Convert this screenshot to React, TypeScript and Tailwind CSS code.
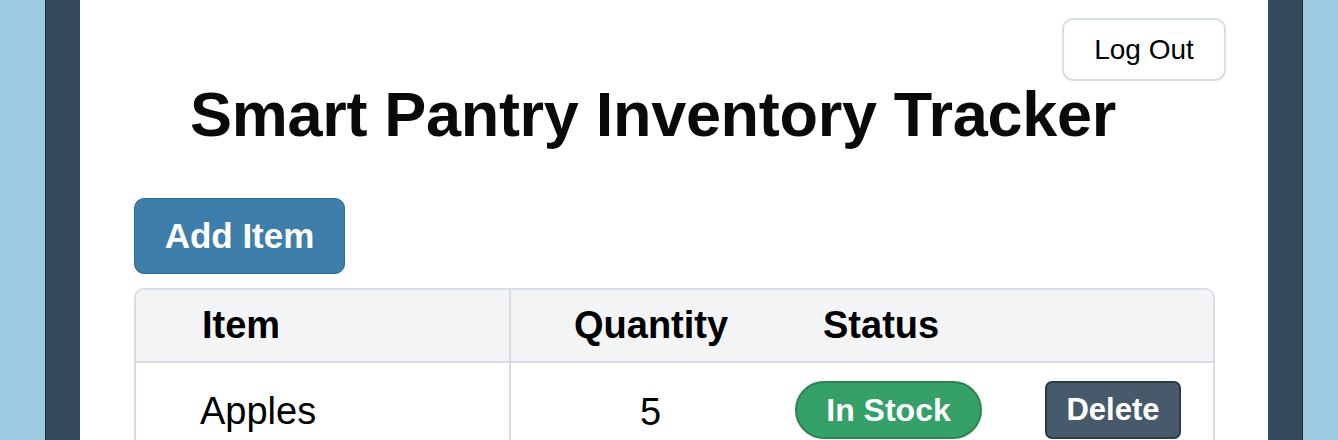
export default function App() {
  return (
    <div
      className="flex h-[440px] w-[1338px] overflow-hidden bg-[#9dcae0]"
      style={{ fontFamily: '"Liberation Sans", Arial, sans-serif' }}
    >
      <div className="ml-[45px] flex h-full w-[1258px] border-x border-[#1f2d38] bg-[#34495a] px-[34px]">
        <div className="flex h-full w-full flex-col bg-white">
          <div className="flex justify-end pr-[42px] pt-[18px]">
            <button className="h-[63px] w-[164px] rounded-[11px] border-2 border-[#d6e0e7] bg-white text-[28px] text-black">
              Log Out
            </button>
          </div>
          <h1 className="-mt-[3px] ml-[110px] text-[63px] font-bold leading-[72px] tracking-[-0.3px] text-[#0a0a0a]">
            Smart Pantry Inventory Tracker
          </h1>
          <div className="mt-[48px] pl-[54px]">
            <button className="h-[76px] w-[211px] rounded-[10px] border border-[#2d6a96] bg-[#3d7eaa] text-[35px] font-bold text-white">
              Add Item
            </button>
          </div>
          <div className="ml-[54px] mt-[14px] w-[1081px] rounded-t-[10px] border-2 border-b-0 border-[#d5dee6]">
            <div className="flex h-[73px] items-center rounded-t-[9px] border-b-2 border-[#d5dee6] bg-[#f2f4f6] text-[38px] font-bold text-black">
              <div className="flex h-full w-[375px] items-center border-r-2 border-[#d5dee6] pl-[66px]">Item</div>
              <div className="w-[312px] pl-[63px]">Quantity</div>
              <div>Status</div>
            </div>
            <div className="flex h-[80px] items-start pt-[18px] text-[38px] text-black">
              <div className="-mt-[18px] flex h-[98px] w-[375px] border-r-2 border-[#d5dee6] pl-[64px] pt-[20px]">Apples</div>
              <div className="w-[284px] pl-[129px] pt-[3px]">5</div>
              <div className="flex h-[58px] w-[187px] items-center justify-center rounded-full border-2 border-[#2a8553] bg-[#35a068] text-[32px] font-bold text-white">
                In Stock
              </div>
              <div className="ml-[63px] flex h-[58px] w-[136px] items-center justify-center rounded-[7px] border-2 border-[#2a3a47] bg-[#475a6b] text-[31px] font-bold text-white">
                Delete
              </div>
            </div>
          </div>
        </div>
      </div>
    </div>
  );
}
